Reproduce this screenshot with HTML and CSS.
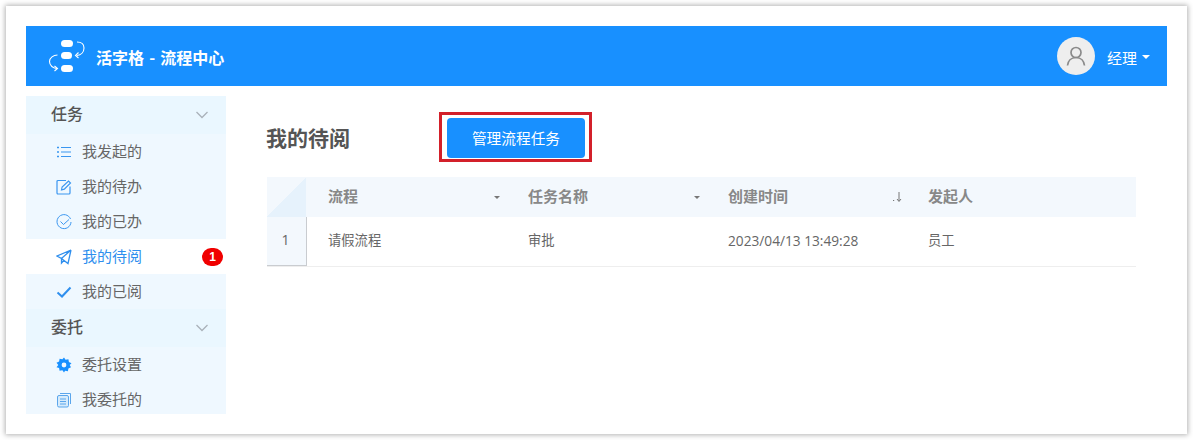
FILE: index.html
```html
<!DOCTYPE html>
<html lang="zh">
<head>
<meta charset="utf-8">
<title>我的待阅</title>
<link rel="stylesheet" href="styles.css">
</head>
<body>
<div class="frame">
  <header class="topbar">
    <div class="brand">
      <svg class="logo" width="40" height="36" viewBox="0 0 40 36" fill="none" stroke="#fff" stroke-width="1.100">
        <rect x="13" y="1" width="12" height="7" rx="3.500" fill="#fff" stroke="none"/>
        <rect x="13" y="13" width="11" height="7" rx="3.500" fill="#fff" stroke="none"/>
        <rect x="13" y="26" width="12" height="7" rx="3.500" fill="#fff" stroke="none"/>
        <path d="M29 3c4 0 7 2 7 6 0 4-3 7-7 7.500"/>
        <path d="M30.500 13.500l-3 3 3 2.500" />
        <path d="M9.500 16c-4 .2-8 2.500-8 6.500 0 4 3.500 7 8 7"/>
        <path d="M6.500 27l3 2.500-3 2.500"/>
      </svg>
      <span class="brand-name">活字格 - 流程中心</span>
    </div>
    <div class="user">
      <span class="avatar">
        <svg width="24" height="24" viewBox="0 0 24 24" fill="none" stroke="#8a8a8a" stroke-width="1.700">
          <circle cx="12" cy="8.500" r="5"/>
          <path d="M3.500 21.500c.5-4.500 3.500-8 8.500-8s8 3.500 8.500 8"/>
        </svg>
      </span>
      <span class="user-name">经理</span>
      <span class="caret"></span>
    </div>
  </header>
  <div class="body">
    <nav class="side">
      <div class="group"><span>任务</span><svg class="chev" width="14" height="8" viewBox="0 0 14 8" fill="none" stroke="#aab2ba" stroke-width="1.300"><path d="M1.500 1l5.500 5.500L12.500 1"/></svg></div>
      <a class="item"><svg class="ic" width="16" height="16" viewBox="0 0 16 16" fill="none" stroke="#3a96f0" stroke-width="1.200"><path d="M5 3.500h10M5 8h10M5 12.500h10"/><path d="M1 3.500h2M1 8h2M1 12.500h2" stroke-width="1.500"/></svg><span>我发起的</span></a>
      <a class="item"><svg class="ic" width="16" height="16" viewBox="0 0 16 16" fill="none" stroke="#3a96f0" stroke-width="1.200"><path d="M14 7.500V14a1 1 0 0 1-1 1H2a1 1 0 0 1-1-1V2.500a1 1 0 0 1 1-1h8"/><path d="M5.500 11l.6-3L12.500 2l2 2-6.200 6.200z"/></svg><span>我的待办</span></a>
      <a class="item"><svg class="ic" width="16" height="16" viewBox="0 0 16 16" fill="none" stroke="#3a96f0" stroke-width="1"><path d="M14.500 5A7 7 0 1 0 15 8"/><path d="M4.500 7.500l3 3 5.500-5"/></svg><span>我的已办</span></a>
      <a class="item active"><svg class="ic" width="16" height="16" viewBox="0 0 16 16" fill="none" stroke="#2f8fee" stroke-width="1.300"><path d="M15 1L1 7l4.500 2.500L15 1zM15 1l-3 13.500-6.500-5V14l2.500-2.800"/></svg><span>我的待阅</span><b class="badge">1</b></a>
      <a class="item"><svg class="ic" width="16" height="16" viewBox="0 0 16 16" fill="none" stroke="#2f8fee" stroke-width="2"><path d="M1.500 8.500l4.500 4L14.500 3.500"/></svg><span>我的已阅</span></a>
      <div class="group"><span>委托</span><svg class="chev" width="14" height="8" viewBox="0 0 14 8" fill="none" stroke="#aab2ba" stroke-width="1.300"><path d="M1.500 1l5.500 5.500L12.500 1"/></svg></div>
      <a class="item"><svg class="ic" width="16" height="16" viewBox="0 0 16 16"><path fill="#1890ff" fill-rule="evenodd" d="M8 .5l1.600 2.300 2.800-.5.500 2.800 2.600 1.100L13.700 8l1.300 2.300-2.600 1.100-.5 2.800-2.800-.5L8 15.500l-1.600-2.300-2.800.5-.5-2.800L.5 10.300 2.300 8 .5 5.700l2.600-1.100.5-2.800 2.800.5zM8 5.600a2.400 2.400 0 1 0 0 4.800 2.400 2.400 0 0 0 0-4.800z"/></svg><span>委托设置</span></a>
      <a class="item"><svg class="ic" width="16" height="16" viewBox="0 0 16 16" fill="none" stroke="#5ba6ec" stroke-width="1"><path d="M4 1.500h10.500V12"/><rect x="1.500" y="3.500" width="11" height="11.500" rx="1.500" fill="#d6ebfb"/><path d="M4 7h6M4 9.500h6M4 12h6"/></svg><span>我委托的</span></a>
    </nav>
    <main class="content">
      <div class="head">
        <h1>我的待阅</h1>
        <div class="mark"><button class="btn">管理流程任务</button></div>
      </div>
      <div class="table">
        <div class="row th">
          <div class="corner"></div>
          <div class="cell w1"><span>流程</span><i class="drop"></i></div>
          <div class="cell w1"><span>任务名称</span><i class="drop"></i></div>
          <div class="cell w1"><span>创建时间</span>
            <svg class="sort" width="12" height="12" viewBox="0 0 12 12" fill="none" stroke="#777" stroke-width="1"><path d="M8 1v9M6 8l2 2.500L10 8"/><path d="M2 9.500h1.200" /></svg>
          </div>
          <div class="cell"><span>发起人</span></div>
        </div>
        <div class="row td">
          <div class="num">1</div>
          <div class="cell w1">请假流程</div>
          <div class="cell w1">审批</div>
          <div class="cell w1 date">2023/04/13 13:49:28</div>
          <div class="cell">员工</div>
        </div>
      </div>
    </main>
  </div>
</div>
</body>
</html>
```
FILE: styles.css
```css
* { box-sizing: border-box; }
html, body { margin: 0; height: 100%; background: #fff; overflow: hidden; }
body {
  padding: 6px;
  font-family: "Noto Sans CJK SC", "Open Sans", sans-serif;
  color: #555;
}
.frame {
  height: 428px;
  background: #fff;
  box-shadow: 0 0 5px 1px rgba(0, 0, 0, .3);
  padding: 20px 20px 0;
}
.topbar {
  height: 60px;
  background: #1890ff;
  color: #fff;
  display: flex;
  align-items: center;
  justify-content: space-between;
  padding: 0 17px 0 22px;
  width: 1141px;
}
.brand { display: flex; align-items: center; gap: 8px; }
.logo { display: block; margin-top: 1px; }
.brand-name { font-size: 16px; font-weight: 700; word-spacing: 1.500px; padding-top: 1px; }
.user { display: flex; align-items: center; }
.avatar {
  width: 38px; height: 38px; border-radius: 50%;
  background: #eeeeee;
  display: flex; align-items: center; justify-content: center;
}
.user-name { font-size: 15px; margin-left: 12px; padding-top: 3px; }
.caret {
  margin-left: 5px;
  width: 0; height: 0;
  border-left: 4px solid transparent;
  border-right: 4px solid transparent;
  border-top: 4px solid #fff;
  margin-top: 2px;
}
.body { display: flex; margin-top: 10px; }
.side { width: 200px; height: 318px; background: #eff8ff; flex: none; overflow: hidden; }
.group {
  height: 38px;
  display: flex; align-items: center; justify-content: space-between;
  padding: 0 17px 0 25px;
  font-size: 16px; font-weight: 500; color: #555;
  background: #eaf7ff;
}
.group span { padding-bottom: 4px; }
.item {
  height: 35px;
  display: flex; align-items: center;
  padding-left: 30px;
  font-size: 15px; color: #666;
  position: relative;
  flex: none;
}
.item span { padding-bottom: 2px; }
.item .ic { flex: none; margin-right: 10px; }
.item.active { background: #fff; color: #2f8fee; }
.badge {
  position: absolute; right: 3px; top: 9px;
  min-width: 21px; height: 18px; border-radius: 9px;
  background: #f00000; color: #fff;
  font: 700 12px/18px "Liberation Sans", sans-serif;
  text-align: center;
}
.content { flex: 1; padding: 16px 0 0 40px; min-width: 0; }
.head { display: flex; align-items: center; height: 50px; }
h1 { margin: 0; width: 173px; font-size: 21px; font-weight: 700; color: #555; line-height: 50px; }
.mark { border: 3px solid #d3202a; padding: 3px 5px; height: 50px; width: 153px; }
.btn {
  display: block; width: 138px; height: 40px;
  border: 0; border-radius: 4px;
  background: #1890ff; color: #fff;
  font: 400 14.7px "Noto Sans CJK SC", sans-serif;
  padding: 0 0 2px;
}
.table { margin-top: 15px; width: 870px; padding-left: 1px; }
.row { display: flex; align-items: center; }
.th { height: 40px; background: #f3f8fd; font-size: 15px; font-weight: 700; color: #888; }
.th .cell span { padding-bottom: 3px; }
.td { height: 50px; border-bottom: 1px solid #eee; font-size: 13.3px; color: #666; }
.td .cell { padding-bottom: 5px; }
.corner {
  width: 40px; height: 40px; flex: none;
  background: linear-gradient(to bottom right, #f3f8fd 50%, #e6f2fc 50%);
  border-right: 1px solid #f3f8fd;
}
.num {
  width: 40px; height: 49px; flex: none;
  background: #f3f8fd;
  border-right: 1px solid #c9ccd0;
  border-bottom: 1px solid #c9ccd0;
  font: 400 14px/46px "Open Sans", sans-serif;
  text-align: center;
  color: #666;
  padding-right: 2px;
}
.cell { padding-left: 21px; display: flex; align-items: center; justify-content: space-between; }
.w1 { width: 200px; flex: none; padding-right: 7px; }
.td .w1 { justify-content: flex-start; }
.td .date { font-family: "Open Sans", sans-serif; font-size: 13.7px; padding-bottom: 3px; }
.drop {
  width: 0; height: 0;
  border-left: 3px solid transparent;
  border-right: 3px solid transparent;
  border-top: 3px solid #777;
}
.sort { margin-right: -3px; }
```
